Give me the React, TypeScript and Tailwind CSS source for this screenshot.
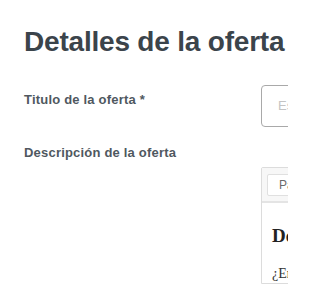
import React from 'react';

const sans = { fontFamily: '"Liberation Sans", Arial, sans-serif' };
const serif = { fontFamily: '"Liberation Serif", "Times New Roman", serif' };

export default function App() {
  return (
    <div className="w-[288px] h-[288px] overflow-hidden bg-white" style={sans}>
      <div className="pl-6 pt-[26px]">
        <h1 className="text-[28px] leading-[32px] font-bold text-[#3b444b] whitespace-nowrap tracking-[-0.2px]">
          Detalles de la oferta
        </h1>

        <div className="mt-[27px] flex">
          <label className="w-[237px] shrink-0 pt-[7px] text-[13px] leading-[16px] font-bold text-[#4f585f] whitespace-nowrap tracking-[0.2px]">
            Titulo de la oferta *
          </label>
          <div className="w-[400px] shrink-0 h-[42px] rounded-[4px] border border-[#a9a9a9] flex items-center px-[16px]">
            <span className="text-[13px] text-[#c4c4c4] whitespace-nowrap">Escribe el título de la oferta</span>
          </div>
        </div>

        <div className="mt-[18px] flex">
          <label className="w-[237px] shrink-0 text-[13px] leading-[16px] font-bold text-[#4f585f] whitespace-nowrap tracking-[0.2px]">
            Descripción de la oferta
          </label>
          <div className="mt-[22px] w-[400px] shrink-0 border border-[#dcdcdc] rounded-tl-[2px]">
            <div className="h-[35px] bg-[#f7f7f7] border-b-2 border-[#e4e4e4] flex items-center px-[5px]">
              <div className="h-[22px] w-[120px] bg-white border border-[#e0e0e0] rounded-[2px] flex items-center px-[11px]">
                <span className="text-[12px] text-[#6a6a6a]">Párrafo</span>
              </div>
            </div>
            <div className="px-[10px] pt-[22px]" style={serif}>
              <h2 className="text-[19px] leading-[22px] font-bold text-[#222] whitespace-nowrap">Descripción</h2>
              <p className="mt-[18px] text-[14px] leading-[18px] text-[#333] whitespace-nowrap">¿En qué consiste la oferta?</p>
            </div>
          </div>
        </div>
      </div>
    </div>
  );
}
